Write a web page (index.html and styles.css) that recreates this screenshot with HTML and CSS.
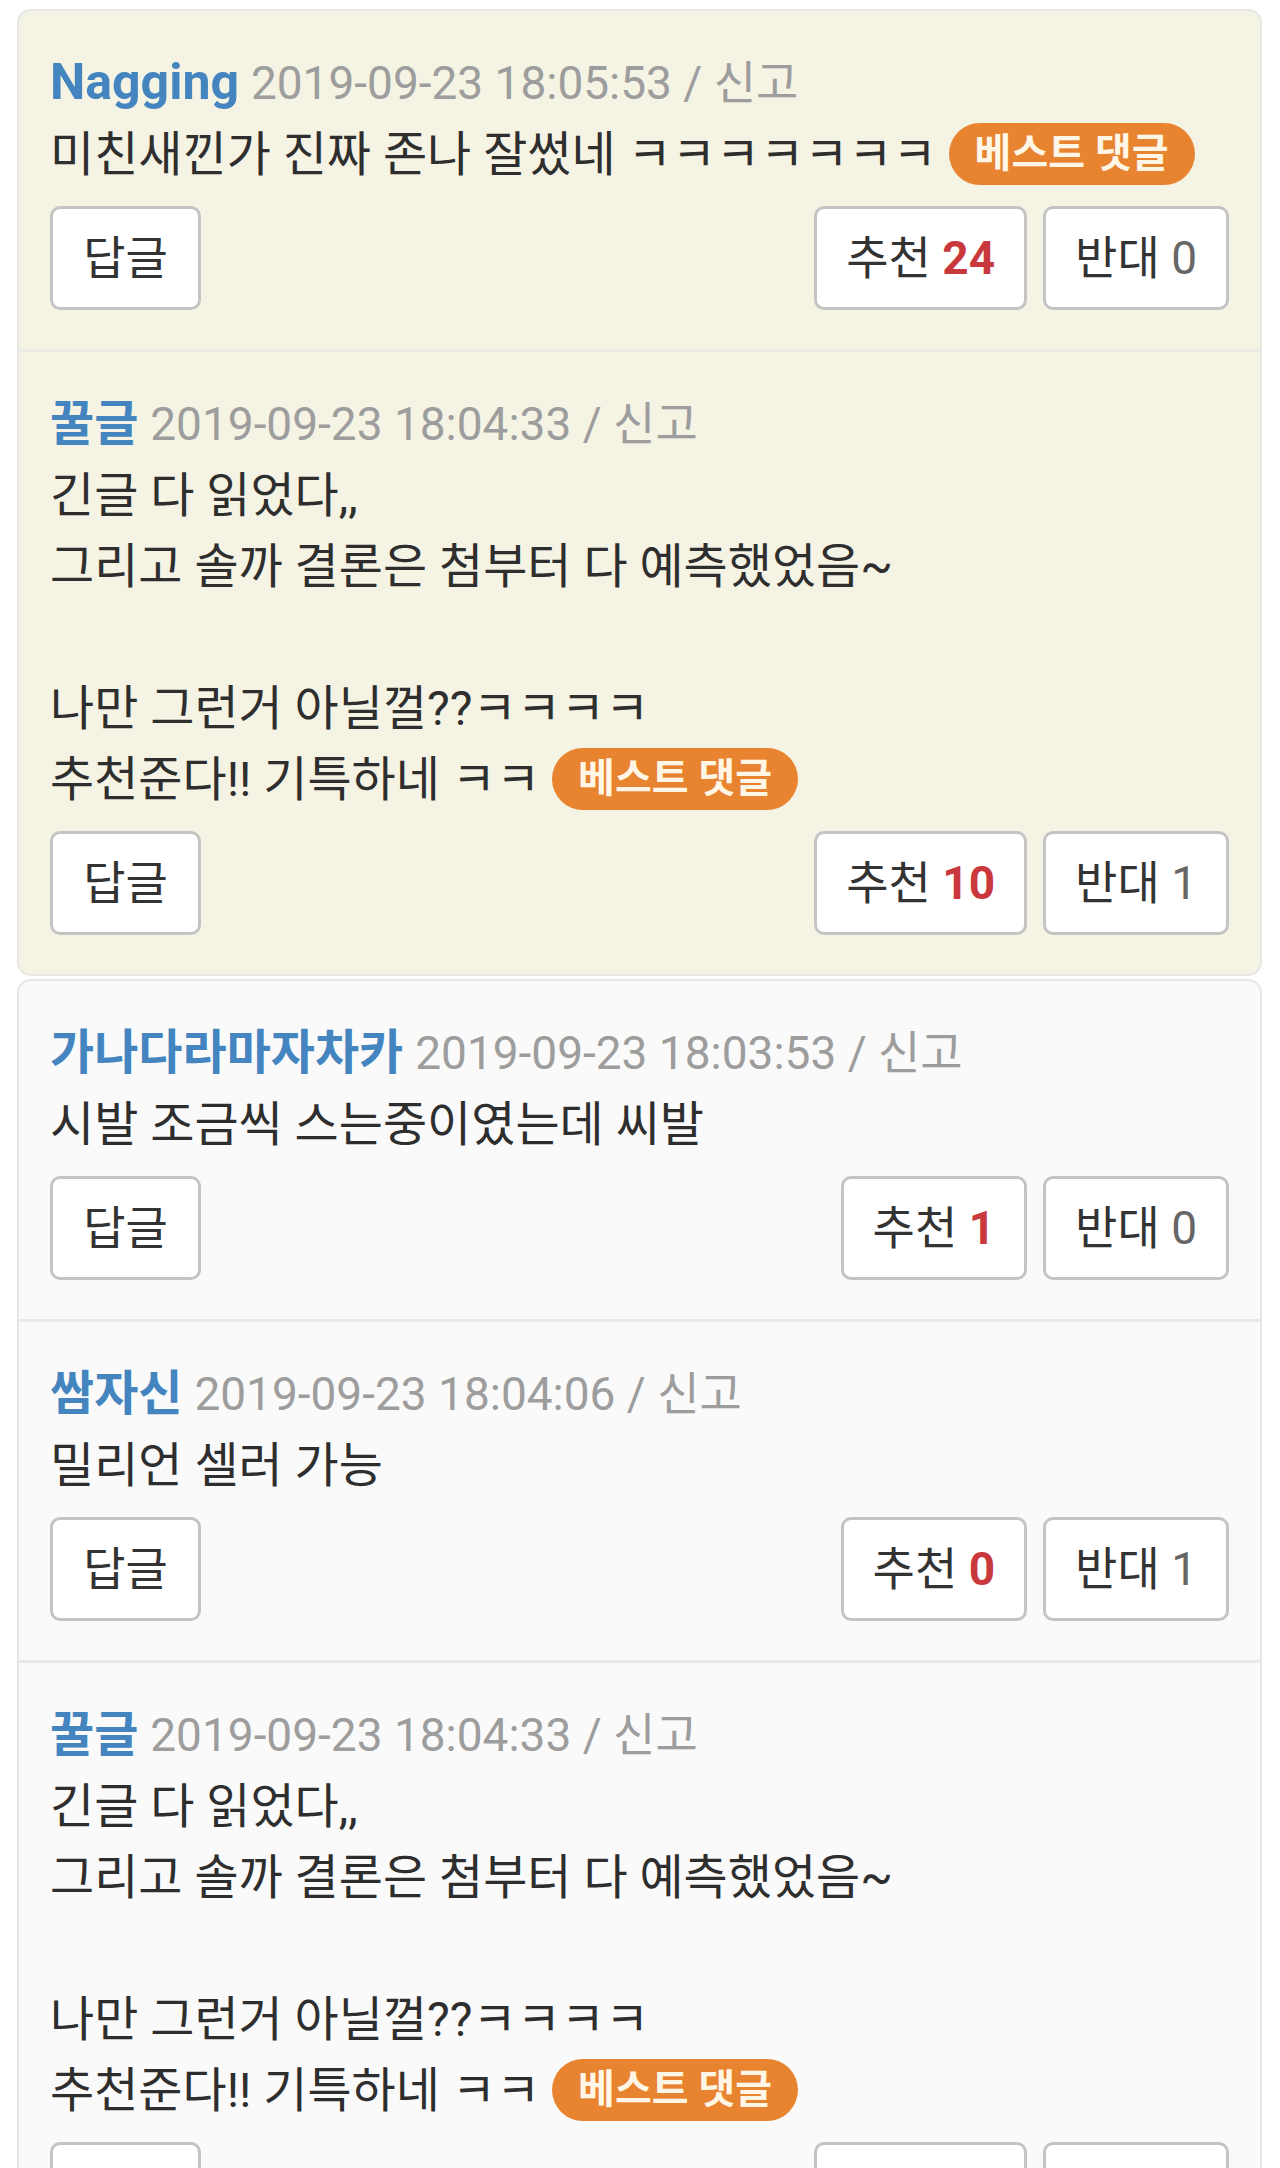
FILE: index.html
```html
<!DOCTYPE html>
<html lang="ko">
<head>
<meta charset="utf-8">
<link rel="stylesheet" href="styles.css">
</head>
<body>
<div class="page">
  <section class="group group-best">
    <article class="comment">
      <div class="meta"><span class="name name-latin">Nagging</span> <span class="date">2019-09-23 18:05:53 / 신고</span></div>
      <div class="body">미친새낀가 진짜 존나 잘썼네 ㅋㅋㅋㅋㅋㅋㅋ <span class="badge">베스트 댓글</span></div>
      <div class="actions">
        <button class="btn">답글</button>
        <div class="votes">
          <button class="btn">추천 <b class="up">24</b></button>
          <button class="btn">반대 <span class="down">0</span></button>
        </div>
      </div>
    </article>
    <article class="comment">
      <div class="meta"><span class="name">꿀글</span> <span class="date">2019-09-23 18:04:33 / 신고</span></div>
      <div class="body">긴글 다 읽었다,,<br>그리고 솔까 결론은 첨부터 다 예측했었음~<br><br>나만 그런거 아닐껄??ㅋㅋㅋㅋ<br>추천준다!! 기특하네 ㅋㅋ <span class="badge">베스트 댓글</span></div>
      <div class="actions">
        <button class="btn">답글</button>
        <div class="votes">
          <button class="btn">추천 <b class="up">10</b></button>
          <button class="btn">반대 <span class="down">1</span></button>
        </div>
      </div>
    </article>
  </section>
  <section class="group group-normal">
    <article class="comment">
      <div class="meta"><span class="name">가나다라마자차카</span> <span class="date">2019-09-23 18:03:53 / 신고</span></div>
      <div class="body">시발 조금씩 스는중이였는데 씨발</div>
      <div class="actions">
        <button class="btn">답글</button>
        <div class="votes">
          <button class="btn">추천 <b class="up">1</b></button>
          <button class="btn">반대 <span class="down">0</span></button>
        </div>
      </div>
    </article>
    <article class="comment">
      <div class="meta"><span class="name">쌈자신</span> <span class="date">2019-09-23 18:04:06 / 신고</span></div>
      <div class="body">밀리언 셀러 가능</div>
      <div class="actions">
        <button class="btn">답글</button>
        <div class="votes">
          <button class="btn">추천 <b class="up">0</b></button>
          <button class="btn">반대 <span class="down">1</span></button>
        </div>
      </div>
    </article>
    <article class="comment">
      <div class="meta"><span class="name">꿀글</span> <span class="date">2019-09-23 18:04:33 / 신고</span></div>
      <div class="body">긴글 다 읽었다,,<br>그리고 솔까 결론은 첨부터 다 예측했었음~<br><br>나만 그런거 아닐껄??ㅋㅋㅋㅋ<br>추천준다!! 기특하네 ㅋㅋ <span class="badge">베스트 댓글</span></div>
      <div class="actions">
        <button class="btn">답글</button>
        <div class="votes">
          <button class="btn">추천 <b class="up">10</b></button>
          <button class="btn">반대 <span class="down">1</span></button>
        </div>
      </div>
    </article>
  </section>
</div>
</body>
</html>
```
FILE: styles.css
```css
html, body {
  margin: 0;
  padding: 0;
  background: #ffffff;
}
body {
  font-family: Roboto, "Noto Sans CJK KR", sans-serif;
  color: #2f2f2f;
  height: 2168px;
  overflow: hidden;
}
.page {
  padding: 9px 18px 0 17px;
  display: flex;
  flex-direction: column;
  gap: 3px;
}
.group {
  border: 2px solid #e6e6e3;
  border-radius: 14px;
  overflow: hidden;
}
.group-best {
  background: #f5f3e3;
}
.group-normal {
  background: #fafafa;
}
.comment {
  padding: 36px 31px 39px 31px;
  border-top: 3px solid #e9e9e6;
}
.comment:first-child {
  border-top: none;
}
.meta, .body {
  font-size: 48px;
  line-height: 71px;
  white-space: nowrap;
}
.name {
  color: #4485bf;
  font-weight: 700;
}
.name-latin {
  font-size: 50px;
}
.date {
  color: #9d9d9d;
  font-size: 46px;
}
.body {
  color: #2e2e2e;
}
.badge {
  display: inline-block;
  vertical-align: 4px;
  background: #e8832f;
  color: #fff6e6;
  font-weight: 700;
  font-size: 40px;
  line-height: 62px;
  padding: 0 26px;
  border-radius: 31px;
}
.actions {
  margin-top: 16px;
  display: flex;
  justify-content: space-between;
  align-items: center;
}
.votes {
  display: flex;
  gap: 16px;
}
.btn {
  font-family: Roboto, "Noto Sans CJK KR", sans-serif;
  height: 104px;
  min-width: 151px;
  padding: 0 29px;
  background: #ffffff;
  border: 3px solid #c4c4c4;
  border-radius: 10px;
  font-size: 46px;
  color: #333333;
  line-height: 1;
}
.up {
  color: #c9383c;
  font-weight: 700;
}
.down {
  color: #666666;
}
```
